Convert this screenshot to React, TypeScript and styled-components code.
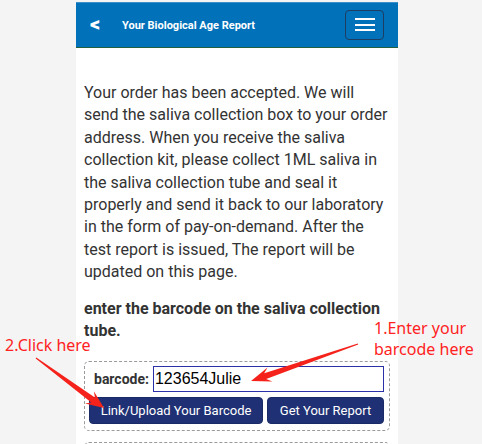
import React from "react";
import styled, { createGlobalStyle } from "styled-components";

const GlobalStyle = createGlobalStyle`
  html, body { margin: 0; padding: 0; }
  body {
    background: #f4f4f4;
    font-family: Roboto, "Liberation Sans", Arial, sans-serif;
  }
  * { box-sizing: border-box; }
`;

const Stage = styled.div`
  position: relative;
  width: 482px;
  height: 444px;
  overflow: hidden;
  padding: 2px 0 0 76px;
`;

const Column = styled.div`
  width: 322px;
  min-height: 442px;
  background: #ffffff;
`;

const Header = styled.header`
  display: flex;
  align-items: center;
  height: 46px;
  padding: 0 14px;
  background: #0171ba;
  border-top: 1px solid #3b8fca;
  border-bottom: 1px solid #24603e;
  color: #ffffff;
`;

const Back = styled.span`
  font-size: 20px;
  font-weight: 900;
  line-height: 1;
  width: 32px;
  margin-top: -2px;
`;

const Title = styled.h1`
  flex: 1;
  margin: 0;
  font-size: 11px;
  font-weight: 700;
  line-height: 1;
`;

const MenuButton = styled.button`
  display: flex;
  flex-direction: column;
  justify-content: center;
  align-items: center;
  gap: 3.5px;
  width: 39px;
  height: 30px;
  padding: 0;
  margin-top: -1px;
  background: transparent;
  border: 1px solid #1d3d63;
  border-radius: 4px;
`;

const MenuLine = styled.span`
  display: block;
  width: 20px;
  height: 2px;
  background: #ffffff;
`;

const Content = styled.main`
  padding: 34px 8px 0;
  color: #333333;
`;

const Paragraph = styled.p`
  margin: 0;
  font-size: 16px;
  line-height: 22.4px;
`;

const Heading = styled.p`
  margin: 14px 0 0;
  font-size: 16px;
  font-weight: 700;
  line-height: 22px;
`;

const DashedBox = styled.div<{ $gap?: number }>`
  margin-top: ${(p) => p.$gap ?? 19}px;
  padding: 4px 5px 6px 4px;
  border: 1px dashed #9a9a9a;
  border-radius: 5px;
  min-height: 20px;
`;

const InputRow = styled.div`
  display: flex;
  align-items: center;
  gap: 4px;
`;

const Label = styled.label`
  margin-left: 5px;
  font-size: 14px;
  font-weight: 700;
  color: #333333;
`;

const BarcodeInput = styled.input`
  flex: 1;
  min-width: 0;
  height: 26px;
  padding: 0 1px;
  border: 1px solid #2b2fa8;
  font-family: "Liberation Sans", Arial, sans-serif;
  font-size: 16px;
  color: #000000;
  outline: none;
`;

const ButtonRow = styled.div`
  display: flex;
  gap: 4px;
  margin-top: 5px;
`;

const ActionButton = styled.button<{ $width: number }>`
  width: ${(p) => p.$width}px;
  height: 27px;
  padding: 0;
  background: #1f3174;
  border: 1px solid #1a2a66;
  border-radius: 4px;
  color: #ffffff;
  font-family: Roboto, "Liberation Sans", Arial, sans-serif;
  font-size: 13px;
`;

const Note = styled.div<{ $left: number; $top: number }>`
  position: absolute;
  left: ${(p) => p.$left}px;
  top: ${(p) => p.$top}px;
  color: #ff2222;
  font-family: "Noto Sans", "Liberation Sans", Arial, sans-serif;
  font-size: 16px;
  line-height: 21px;
  white-space: nowrap;
`;

const Overlay = styled.svg`
  position: absolute;
  left: 0;
  top: 0;
  pointer-events: none;
`;

function arrow(
  x1: number,
  y1: number,
  x2: number,
  y2: number,
  shaftW: number,
  headW: number,
  headLen: number
): string {
  const dx = x2 - x1;
  const dy = y2 - y1;
  const len = Math.hypot(dx, dy);
  const ux = dx / len;
  const uy = dy / len;
  const nx = -uy;
  const ny = ux;
  const at = (d: number, w: number) =>
    `${(x1 + ux * d + nx * w).toFixed(1)},${(y1 + uy * d + ny * w).toFixed(1)}`;
  const joint = len - headLen * 0.75;
  const barb = len - headLen;
  return [
    at(0, 0.5),
    at(joint, shaftW / 2),
    at(barb, headW / 2),
    at(len, 0),
    at(barb, -headW / 2),
    at(joint, -shaftW / 2),
    at(0, -0.5),
  ].join(" ");
}

export default function App() {
  return (
    <>
      <GlobalStyle />
      <Stage>
        <Column>
          <Header>
            <Back>&lt;</Back>
            <Title>Your Biological Age Report</Title>
            <MenuButton aria-label="menu">
              <MenuLine />
              <MenuLine />
              <MenuLine />
            </MenuButton>
          </Header>
          <Content>
            <Paragraph>
              Your order has been accepted. We will send the saliva collection box to
              your order address. When you receive the saliva collection kit, please
              collect 1ML saliva in the saliva collection tube and seal it properly and
              send it back to our laboratory in the form of pay-on-demand. After the test
              report is issued, The report will be updated on this page.
            </Paragraph>
            <Heading>enter the barcode on the saliva collection tube.</Heading>
            <DashedBox>
              <InputRow>
                <Label>barcode:</Label>
                <BarcodeInput defaultValue="123654Julie" />
              </InputRow>
              <ButtonRow>
                <ActionButton $width={174}>Link/Upload Your Barcode</ActionButton>
                <ActionButton $width={117}>Get Your Report</ActionButton>
              </ButtonRow>
            </DashedBox>
            <DashedBox $gap={11} />
          </Content>
        </Column>
        <Note $left={5} $top={335}>2.Click here</Note>
        <Note $left={374} $top={318}>
          1.Enter your
          <br />
          barcode here
        </Note>
        <Overlay width={482} height={444} viewBox="0 0 482 444">
          <polygon points={arrow(36, 358, 104, 408, 6, 15, 18)} fill="#f5221b" />
          <polygon points={arrow(358, 344, 251, 381, 6, 15, 20)} fill="#f5221b" />
        </Overlay>
      </Stage>
    </>
  );
}
